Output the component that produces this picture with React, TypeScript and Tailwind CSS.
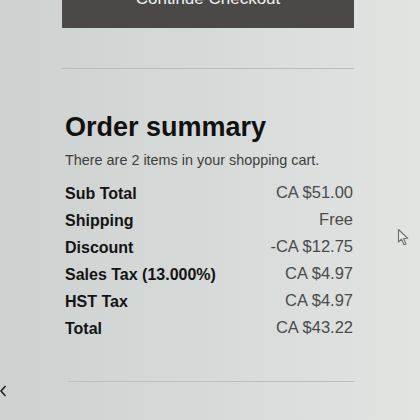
import { ReactNode } from 'react';

// 注文サマリーの行データ
const rows: { label: string; value: string }[] = [
  { label: 'Sub Total', value: 'CA $51.00' },
  { label: 'Shipping', value: 'Free' },
  { label: 'Discount', value: '-CA $12.75' },
  { label: 'Sales Tax (13.000%)', value: 'CA $4.97' },
  { label: 'HST Tax', value: 'CA $4.97' },
  { label: 'Total', value: 'CA $43.22' },
];

function SummaryRow({ label, value }: { label: string; value: ReactNode }) {
  return (
    <div className="flex h-[27px] items-center justify-between">
      <span className="text-[16px] font-bold text-[#141414]">{label}</span>
      <span className="-mt-[3px] text-[16.5px] text-[#4a4b4b]">{value}</span>
    </div>
  );
}

function Cursor() {
  return (
    <svg
      className="absolute left-[397px] top-[228px]"
      width="14"
      height="19"
      viewBox="0 0 14 19"
      fill="none"
    >
      <path
        d="M1.5 1.5 L1.5 14 L4.5 11.2 L7 16.8 L9 15.9 L6.6 10.5 L10.8 10.3 Z"
        fill="#e6e8e6"
        stroke="#6a6d6c"
        strokeWidth="1.1"
        strokeLinejoin="round"
      />
    </svg>
  );
}

export default function App() {
  return (
    <div
      className="relative h-[420px] w-[420px] overflow-hidden bg-linear-to-r from-[#cdd1cf] via-[#d6dad8] to-[#e2e4e2] text-[#141414]"
      style={{ fontFamily: '"Liberation Sans", Arial, sans-serif' }}
    >
      <div className="ml-[62px] w-[292px]">
        {/* 上部ボタン（途中で切れている） */}
        <div className="flex h-[28px] justify-center overflow-hidden bg-[#4b4947]">
          <span className="-mt-[11px] text-[17px] leading-[20px] text-[#f2f2f2]">
            Continue Checkout
          </span>
        </div>

        <div className="mt-[40px] h-px bg-[#b9bdbb]" />

        {/* サマリー */}
        <div className="pl-[3px] pr-[1px]">
          <h1 className="mt-[42px] text-[27px] font-bold leading-[32px] text-[#111]">
            Order summary
          </h1>
          <p className="mt-[7px] text-[14.4px] leading-[20px] text-[#3d3e3e]">
            There are 2 items in your shopping cart.
          </p>
          <div className="mt-[10px] flex flex-col">
            {rows.map((r) => (
              <SummaryRow key={r.label} label={r.label} value={r.value} />
            ))}
          </div>
          <div className="ml-[3px] mr-[-2px] mt-[39px] h-px bg-[#bcc0be]" />
        </div>
      </div>

      {/* 左端の矢印 */}
      <svg
        className="absolute left-0 top-[385px]"
        width="8"
        height="12"
        viewBox="0 0 8 12"
        fill="none"
      >
        <path d="M5.5 1 L1 6 L5.5 11" stroke="#1a1a1a" strokeWidth="1.5" />
      </svg>
      <Cursor />
    </div>
  );
}
